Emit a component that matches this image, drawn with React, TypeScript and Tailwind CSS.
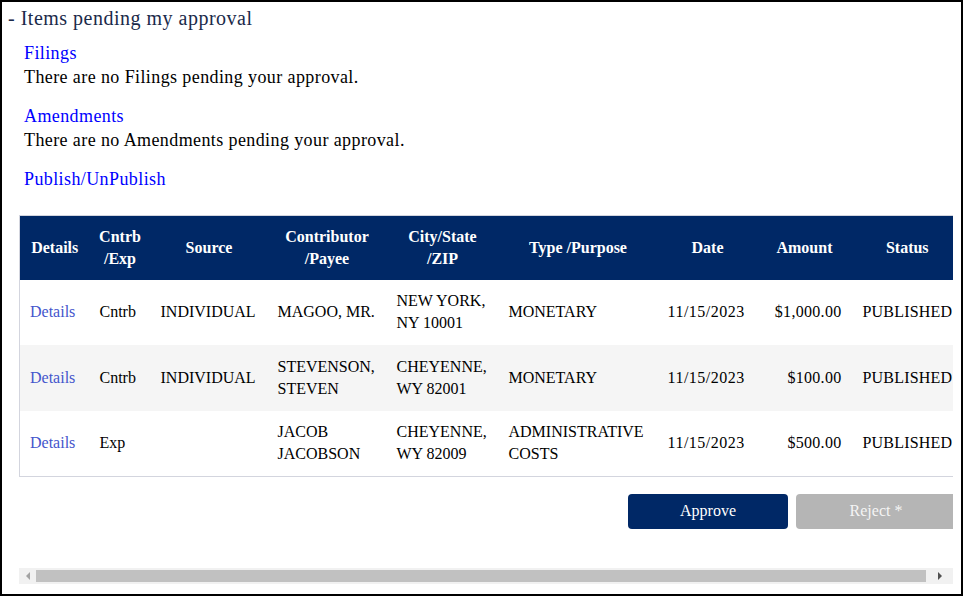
import React from "react";

const rows = [
  { ce: "Cntrb", src: "INDIVIDUAL", name: ["MAGOO, MR."], city: ["NEW YORK,", "NY 10001"], type: ["MONETARY"], date: "11/15/2023", amt: "$1,000.00", status: "PUBLISHED" },
  { ce: "Cntrb", src: "INDIVIDUAL", name: ["STEVENSON,", "STEVEN"], city: ["CHEYENNE,", "WY 82001"], type: ["MONETARY"], date: "11/15/2023", amt: "$100.00", status: "PUBLISHED" },
  { ce: "Exp", src: "", name: ["JACOB", "JACOBSON"], city: ["CHEYENNE,", "WY 82009"], type: ["ADMINISTRATIVE", "COSTS"], date: "11/15/2023", amt: "$500.00", status: "PUBLISHED" },
];

const Lines = ({ l }: { l: string[] }) => (
  <>
    {l.map((t, i) => (
      <div key={i}>{t}</div>
    ))}
  </>
);

export default function App() {
  return (
    <div
      className="w-[963px] h-[596px] border-2 border-black bg-white overflow-hidden text-black"
      style={{ fontFamily: '"Liberation Serif", serif' }}
    >
      <div className="pl-[6px] pt-[4px] text-[20px] leading-[24px] tracking-[0.5px] text-[#1b2a4a]">- Items pending my approval</div>
      <div className="pl-[22px] pt-[11px] text-[18px] leading-[24px] tracking-[0.4px]">
        <div className="text-[#0000ff]">Filings</div>
        <div>There are no Filings pending your approval.</div>
        <div className="text-[#0000ff] mt-[15px]">Amendments</div>
        <div>There are no Amendments pending your approval.</div>
        <div className="text-[#0000ff] mt-[15px]">Publish/UnPublish</div>
      </div>
      <div className="ml-[17px] mt-[24px] w-[934px] overflow-hidden">
        <div className="w-[944px]">
          <table className="table-fixed border-collapse w-[944px] text-[16px] leading-[22px] border border-[#d3d5de]">
            <colgroup>
              <col className="w-[70px]" />
              <col className="w-[61px]" />
              <col className="w-[117px]" />
              <col className="w-[119px]" />
              <col className="w-[112px]" />
              <col className="w-[159px]" />
              <col className="w-[100px]" />
              <col className="w-[94px]" />
              <col className="w-[112px]" />
            </colgroup>
            <thead>
              <tr className="bg-[#002866] text-white h-[64px] text-[16px]">
                <th className="px-[4px] font-bold">Details</th>
                <th className="px-[4px] font-bold">Cntrb<br />/Exp</th>
                <th className="px-[4px] font-bold">Source</th>
                <th className="px-[4px] font-bold">Contributor<br />/Payee</th>
                <th className="px-[4px] font-bold">City/State<br />/ZIP</th>
                <th className="px-[4px] font-bold">Type /Purpose</th>
                <th className="px-[4px] font-bold">Date</th>
                <th className="px-[4px] font-bold">Amount</th>
                <th className="px-[4px] font-bold">Status</th>
              </tr>
            </thead>
            <tbody>
              {rows.map((r, i) => (
                <tr key={i} className={(i % 2 === 1 ? "bg-[#f5f5f5] " : "bg-white ") + "h-[65.6px]"}>
                  <td className="pl-[10px] text-[#4455cc]">Details</td>
                  <td className="pl-[10px]">{r.ce}</td>
                  <td className="pl-[10px] whitespace-nowrap">{r.src}</td>
                  <td className="pl-[10px]"><Lines l={r.name} /></td>
                  <td className="pl-[10px]"><Lines l={r.city} /></td>
                  <td className="pl-[10px]"><Lines l={r.type} /></td>
                  <td className="pl-[10px] whitespace-nowrap tracking-[0.5px]">{r.date}</td>
                  <td className="pr-[10px] text-right whitespace-nowrap tracking-[0.3px]">{r.amt}</td>
                  <td className="pl-[11px] whitespace-nowrap tracking-[0.2px]">{r.status}</td>
                </tr>
              ))}
            </tbody>
          </table>
          <div className="flex justify-end gap-[8px] mt-[17px] pr-[7px]">
            <button className="w-[160px] h-[35px] rounded-[4px] bg-[#002866] text-white text-[16px]">Approve</button>
            <button className="w-[160px] h-[35px] rounded-[4px] bg-[#b5b5b5] text-[#f4f4f4] text-[16px]">Reject *</button>
          </div>
        </div>
      </div>
      <div className="ml-[17px] mt-[39px] w-[934px] h-[16px] bg-[#f1f1f1] flex items-center">
        <div className="w-[17px] flex justify-center">
          <div className="w-0 h-0 border-y-[4px] border-y-transparent border-r-[4px] border-r-[#a3a3a3]" />
        </div>
        <div className="flex-1 h-[12px] bg-[#c1c1c1]" />
        <div className="w-[27px] flex justify-center">
          <div className="w-0 h-0 border-y-[4px] border-y-transparent border-l-[4px] border-l-[#505050]" />
        </div>
      </div>
    </div>
  );
}
